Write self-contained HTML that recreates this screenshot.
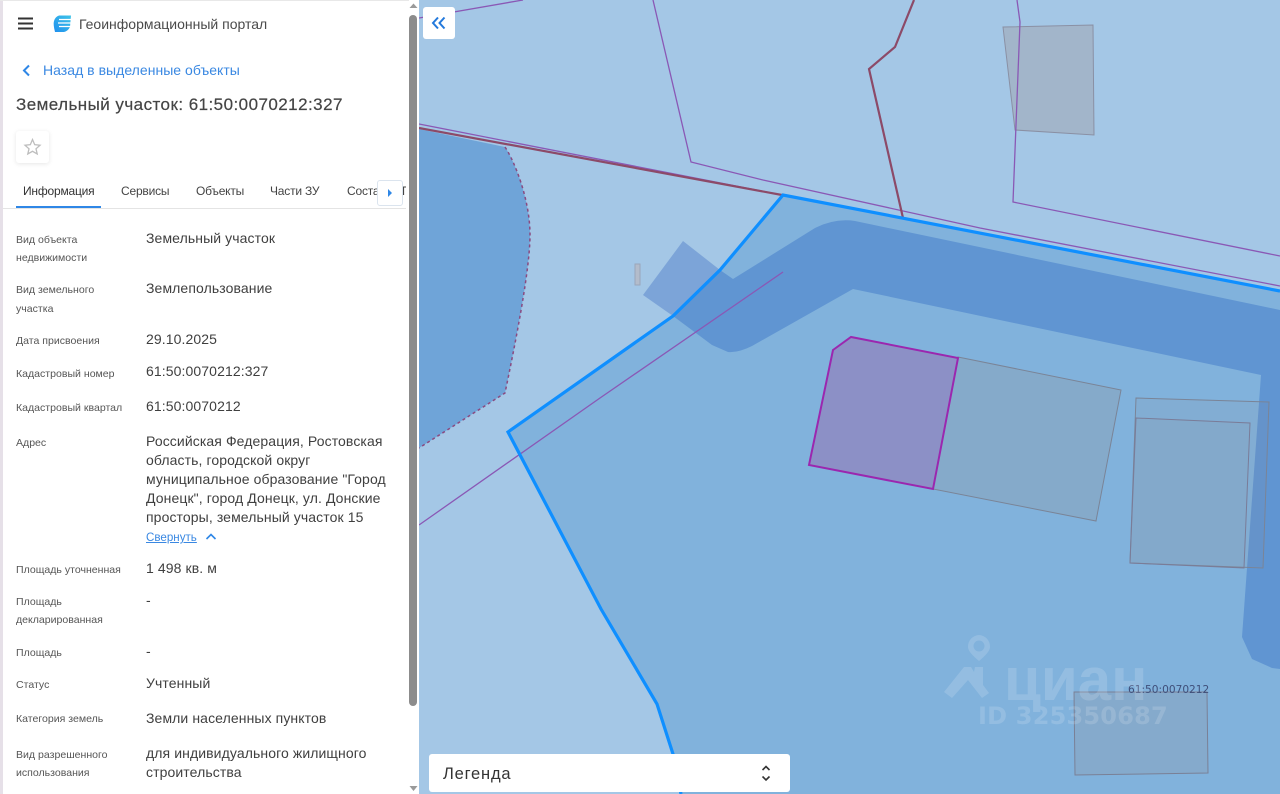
<!DOCTYPE html>
<html lang="ru"><head><meta charset="utf-8"><title>Геоинформационный портал</title>
<style>
html,body{margin:0;padding:0;width:1280px;height:794px;overflow:hidden;background:#fff;font-family:"Liberation Sans",sans-serif}
#side{position:absolute;left:0;top:0;width:419px;height:794px;background:#fff;overflow:hidden}
#side .t{position:absolute;white-space:nowrap}
.l{font-size:10.55px;color:#555;line-height:18px;left:16px}
.v{font-size:14px;color:#3f3f3f;line-height:19px;left:146px;letter-spacing:.1px}
.tab{font-size:12px;color:#444;top:183px;line-height:16px;letter-spacing:-.2px}
#map{position:absolute;left:419px;top:0;width:861px;height:794px}
</style></head><body>
<div id="side">
<div style="position:absolute;left:0;top:0;width:3px;height:794px;background:#e6e0e8"></div>
<div style="position:absolute;left:0;top:0;width:419px;height:1px;background:#e8e8e8"></div>
<div style="position:absolute;left:16px;top:131px;width:33px;height:32px;background:#fff;border-radius:3px;box-shadow:0 1px 5px rgba(0,0,0,.1)"></div>
<svg style="position:absolute;left:0;top:0" width="419" height="215">
<defs><linearGradient id="lg" x1="0" y1="1" x2="1" y2="0"><stop offset="0" stop-color="#1f8fee"/><stop offset="1" stop-color="#3fc4e8"/></linearGradient></defs>
<path d="M18 18.500H33M18 23.500H33M18 28.500H33" stroke="#333" stroke-width="2"/>
<path d="M59 15.500H71L70 27Q68 31 64 32H55Q53 24 54 21Q55 17 59 15.500Z" fill="url(#lg)"/>
<path d="M59 19.500H72M58 23H72M59 26.500H71" stroke="#fff" stroke-width="1.200"/>
<path d="M29 65.500L24 70.500L29 75.500" fill="none" stroke="#2f87e6" stroke-width="2"/>
<path d="M32.500 139.500L34.700 144.700L40 145.200L36 148.800L37.200 154L32.500 151.300L27.800 154L29 148.800L25 145.200L30.300 144.700Z" fill="none" stroke="#bdbdbd" stroke-width="1.300"/>
</svg>
<div class="t" style="left:79px;top:15px;font-size:14px;line-height:18px;color:#4a4a4a">Геоинформационный портал</div>
<div class="t" style="left:43px;top:62px;font-size:14px;line-height:17px;color:#3a88e2;letter-spacing:.03px">Назад в выделенные объекты</div>
<div class="t" style="left:16px;top:94px;font-size:17px;line-height:21px;color:#444;letter-spacing:.45px;-webkit-text-stroke:.2px #444">Земельный участок: 61:50:0070212:327</div>
<div class="t tab" style="left:23px;color:#333">Информация</div>
<div class="t tab" style="left:121px">Сервисы</div>
<div class="t tab" style="left:196px">Объекты</div>
<div class="t tab" style="left:270px">Части ЗУ</div>
<div class="t tab" style="left:347px">Состав</div>
<div class="t tab" style="left:402px;width:4px;overflow:hidden">П</div>
<div style="position:absolute;left:3px;top:208px;width:403px;height:1px;background:#e4e4e4"></div>
<div style="position:absolute;left:16px;top:206px;width:85px;height:2px;background:#2f87e6"></div>
<div style="position:absolute;left:377px;top:180px;width:24px;height:24px;background:#fff;border:1px solid #dbe4ee;border-radius:3px"></div>
<svg style="position:absolute;left:377px;top:180px" width="26" height="26"><path d="M11 9V17L15 13Z" fill="#2f87e6"/></svg>

<div class="t l" style="top:231px">Вид объекта<br>недвижимости</div>
<div class="t v" style="top:229px">Земельный участок</div>
<div class="t l" style="top:281px;line-height:19px">Вид земельного<br>участка</div>
<div class="t v" style="top:279px">Землепользование</div>
<div class="t l" style="top:332px">Дата присвоения</div>
<div class="t v" style="top:330px">29.10.2025</div>
<div class="t l" style="top:365px">Кадастровый номер</div>
<div class="t v" style="top:362px">61:50:0070212:327</div>
<div class="t l" style="top:399px">Кадастровый квартал</div>
<div class="t v" style="top:397px">61:50:0070212</div>
<div class="t l" style="top:434px">Адрес</div>
<div class="t v" style="top:432px">Российская Федерация, Ростовская<br>область, городской округ<br>муниципальное образование "Город<br>Донецк", город Донецк, ул. Донские<br>просторы, земельный участок 15</div>
<div class="t" style="left:146px;top:530px;font-size:11.6px;line-height:16px;color:#3a88e2;text-decoration:underline">Свернуть</div>
<svg style="position:absolute;left:204px;top:531px" width="14" height="12"><path d="M2.500 8L7 3.500L11.500 8" fill="none" stroke="#2f87e6" stroke-width="1.600"/></svg>
<div class="t l" style="top:561px">Площадь уточненная</div>
<div class="t v" style="top:559px">1 498 кв. м</div>
<div class="t l" style="top:593px">Площадь<br>декларированная</div>
<div class="t v" style="top:591px">-</div>
<div class="t l" style="top:644px">Площадь</div>
<div class="t v" style="top:642px">-</div>
<div class="t l" style="top:676px">Статус</div>
<div class="t v" style="top:674px">Учтенный</div>
<div class="t l" style="top:710px">Категория земель</div>
<div class="t v" style="top:709px">Земли населенных пунктов</div>
<div class="t l" style="top:746px">Вид разрешенного<br>использования</div>
<div class="t v" style="top:744px">для индивидуального жилищного<br>строительства</div>

<div style="position:absolute;left:409px;top:0;width:10px;height:794px;background:#fff"></div>
<div style="position:absolute;left:409px;top:15px;width:8px;height:691px;background:#8c8c8c;border-radius:4px"></div>
<svg style="position:absolute;left:408px;top:0" width="11" height="794"><path d="M1.500 8L5.500 3.500L9.500 8ZM1.500 786L5.500 791L9.500 786Z" fill="#9a9a9a"/></svg>
</div>

<svg id="map" width="861" height="794" viewBox="419 0 861 794">
<rect x="419" y="0" width="861" height="794" fill="#a4c7e6"/>
<path d="M508 432L673 316L720 270L783 195L1280 291V794H681L673 754L657 704L601 609Z" fill="#81b2dc"/>
<path d="M419 129L505 147C515 162 530 200 530 235C530 270 515 345 505 393L419 448Z" fill="#6fa4d8"/>
<path d="M505 147C515 162 530 200 530 235C530 270 515 345 505 393L419 448" fill="none" stroke="#8a4a80" stroke-width="1.500" stroke-dasharray="3 3"/>
<path d="M643 295L683 241L720 270L673 316Z" fill="#7ca4d8"/>
<path d="M720 270L733 279L815 228Q835 218 855 221L1280 310V669L1272 668L1252 659L1242 637L1261 375L853 289L752 346Q738 353 728 352L712 345L673 316Z" fill="#6095d2"/>
<rect x="635" y="264" width="5" height="21" fill="#b3bccb" stroke="#9aa6ba" stroke-width="1"/>
<path d="M1003 27L1093 25L1094 135L1015 130Z" fill="rgb(160,140,140)" fill-opacity=".3" stroke="#8a90a4" stroke-width="1"/>
<path d="M958 357L1121 390L1096 521L933 489Z" fill="rgb(150,140,140)" fill-opacity=".22" stroke="#7a8497" stroke-width="1"/>
<path d="M1136 398L1269 402L1263 568L1130 563Z" fill="rgb(150,140,140)" fill-opacity=".1" stroke="#7a8497" stroke-width="1"/>
<path d="M1136 418L1250 423L1244 568L1130 563Z" fill="rgb(150,140,140)" fill-opacity=".1" stroke="#7a7c98" stroke-width="1"/>
<path d="M1074 692L1207 692L1208 773L1075 775Z" fill="rgb(150,140,140)" fill-opacity=".2" stroke="#7a8096" stroke-width="1"/>
<path d="M833 350L851 337L958 358L933 489L809 465Z" fill="#8c90c6" stroke="#9b27af" stroke-width="2"/>
<path d="M419 18L523 0M653 0L691 162L763 180L980 228L1280 286M1017 0L1020 22L1013 202L1280 256M419 124L782 195M419 525L600 398L783 272" fill="none" stroke="#8a58b5" stroke-width="1.300"/>
<path d="M419 128L782 195M914 0L895 47L869 69L903 218" fill="none" stroke="#8c4a68" stroke-width="2.200"/>
<path d="M681 794L673 754L657 704L601 609L508 432L673 316L720 270L783 195L1280 291" fill="none" stroke="#0f8fff" stroke-width="3.200"/>
<text x="1128" y="693" font-family="DejaVu Sans, sans-serif" font-size="10.6" fill="#3f4f7a">61:50:0070212</text>
<g fill="#fff" opacity=".15">
<path fill-rule="evenodd" d="M979 635A11.500 11.500 0 0 1 990 647C990 651 985 656 979 661C973 656 968 651 968 647A11.500 11.500 0 0 1 979 635ZM979 640.500A5.500 5.500 0 1 0 979 651.500A5.500 5.500 0 1 0 979 640.500Z"/>
<path d="M944 692L964 667L971 667L974 672L975 667L983 667L983 685L989 693L982 698L968 680L952 698Z"/>
<text x="1004" y="700" font-family="Liberation Sans, sans-serif" font-size="60" font-weight="700">циан</text>
<text x="978" y="724" font-family="DejaVu Sans, sans-serif" font-size="24" font-weight="700" letter-spacing=".2">ID 325350687</text>
</g>
</svg>

<div style="position:absolute;left:423px;top:7px;width:32px;height:32px;background:#fff;border-radius:3px"></div>
<svg style="position:absolute;left:423px;top:7px" width="32" height="32"><path d="M15 10.500L10 16L15 21.500M21.500 10.500L16.500 16L21.500 21.500" fill="none" stroke="#2379dc" stroke-width="2"/></svg>
<div style="position:absolute;left:429px;top:754px;width:361px;height:38px;background:#fff;border-radius:3px"></div>
<div style="position:absolute;left:443px;top:764px;font-size:16.5px;line-height:20px;color:#333;letter-spacing:.8px;white-space:nowrap">Легенда</div>
<svg style="position:absolute;left:758px;top:764px" width="16" height="19"><path d="M4.500 6L8 2.500L11.500 6M4.500 12.500L8 16L11.500 12.500" fill="none" stroke="#333" stroke-width="1.600"/></svg>
</body></html>
